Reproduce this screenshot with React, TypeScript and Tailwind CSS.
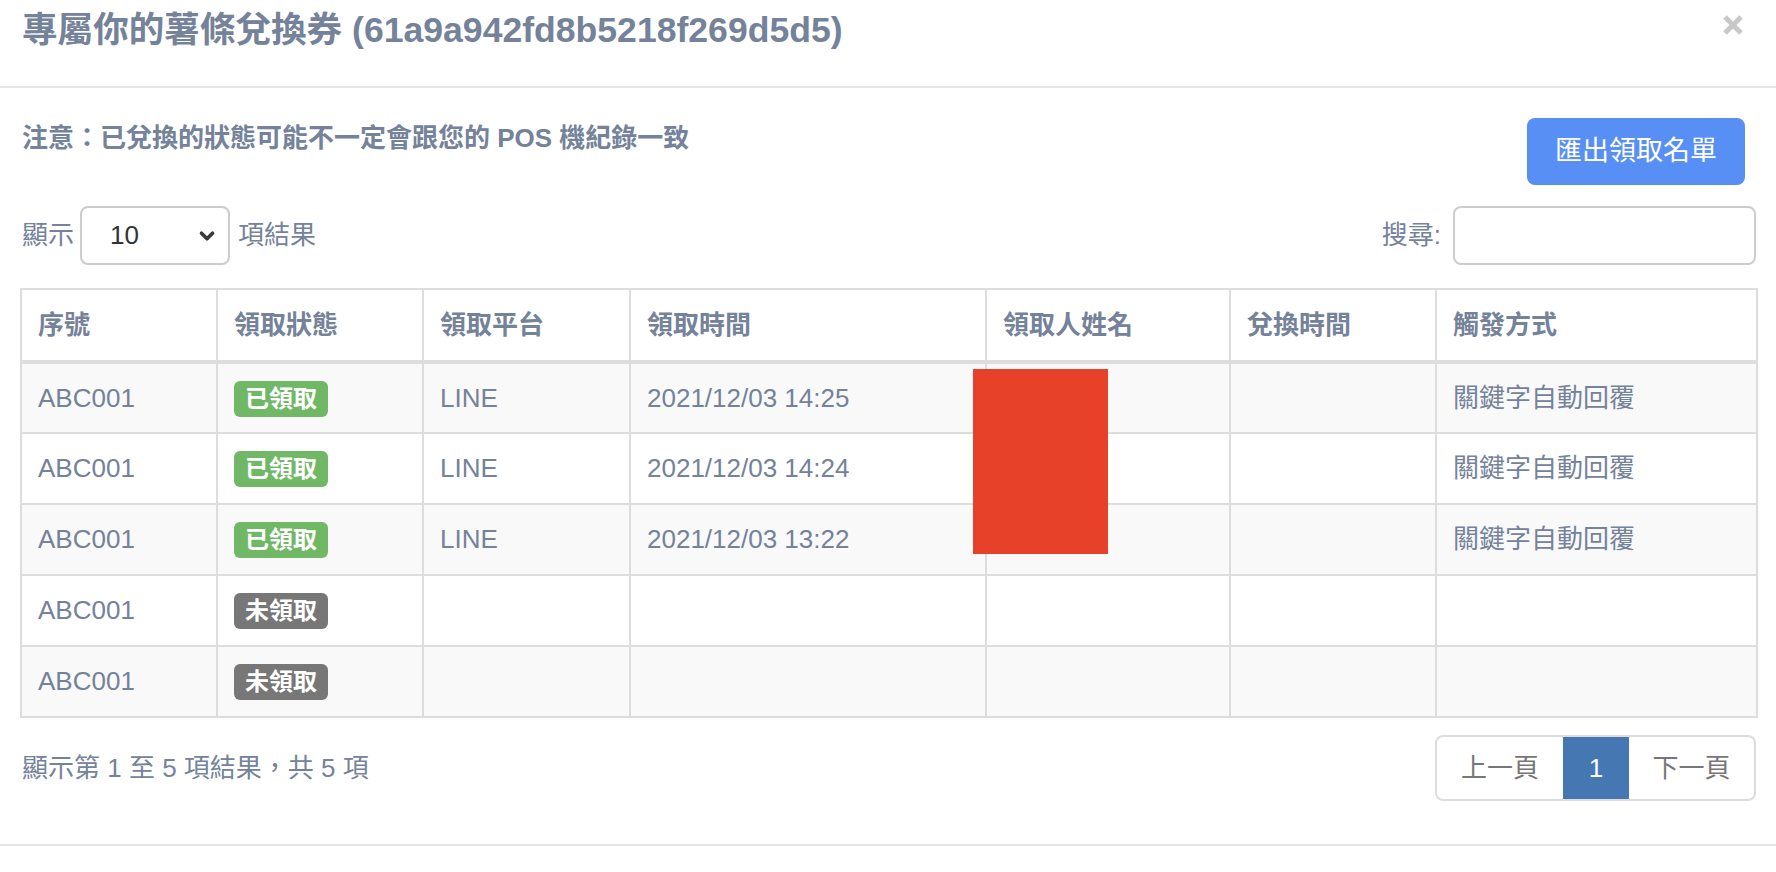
import { ChevronDown } from "lucide-react";

type Row = {
  id: string;
  claimed: boolean;
  platform: string;
  time: string;
  trigger: string;
};

const rows: Row[] = [
  { id: "ABC001", claimed: true, platform: "LINE", time: "2021/12/03 14:25", trigger: "關鍵字自動回覆" },
  { id: "ABC001", claimed: true, platform: "LINE", time: "2021/12/03 14:24", trigger: "關鍵字自動回覆" },
  { id: "ABC001", claimed: true, platform: "LINE", time: "2021/12/03 13:22", trigger: "關鍵字自動回覆" },
  { id: "ABC001", claimed: false, platform: "", time: "", trigger: "" },
  { id: "ABC001", claimed: false, platform: "", time: "", trigger: "" },
];

const headers = ["序號", "領取狀態", "領取平台", "領取時間", "領取人姓名", "兌換時間", "觸發方式"];
const widths = [196, 206, 207, 356, 244, 206, 321];

function Badge({ claimed }: { claimed: boolean }) {
  return (
    <span
      className={`inline-block h-[36px] px-[11px] rounded-[6px] text-white font-bold text-[24px] leading-[36px] ${
        claimed ? "bg-[#71b866]" : "bg-[#777777]"
      }`}
    >
      {claimed ? "已領取" : "未領取"}
    </span>
  );
}

export default function App() {
  return (
    <div className="w-[1776px] h-[872px] bg-white overflow-hidden text-[#74829a] font-['Liberation_Sans','Noto_Sans_CJK_TC',sans-serif]">
      {/* header */}
      <div className="h-[88px] border-b-2 border-[#e5e5e5] px-[22px] flex items-start justify-between">
        <h4 className="pt-[8px] text-[35.6px] leading-[44px] font-bold">專屬你的薯條兌換券 (61a9a942fd8b5218f269d5d5)</h4>
        <button className="mt-[14px] mr-[10px] w-[22px] h-[22px]">
          <svg viewBox="0 0 22 22" className="w-[22px] h-[22px]">
            <path d="M3 3 L19 19 M19 3 L3 19" stroke="#c8c8c8" strokeWidth="5" />
          </svg>
        </button>
      </div>

      {/* body */}
      <div className="px-[20px] pt-[30px]">
        <div className="flex items-start justify-between">
          <p className="ml-[2px] mt-[2px] text-[26px] leading-[36px] font-bold">注意：已兌換的狀態可能不一定會跟您的 POS 機紀錄一致</p>
          <button className="mr-[11px] w-[218px] h-[67px] rounded-[8px] bg-[#588ff5] text-white text-[27px]">匯出領取名單</button>
        </div>

        <div className="mt-[21px] flex items-center justify-between h-[59px]">
          <div className="flex items-center text-[26px] pl-[2px]">
            <span>顯示</span>
            <div className="ml-[6px] w-[150px] h-[59px] border-2 border-[#cccccc] rounded-[8px] flex items-center justify-between pl-[28px] pr-[10px] text-[#333333]">
              <span className="text-[26px]">10</span>
              <ChevronDown className="w-[22px] h-[22px] text-[#3a3a3a]" strokeWidth={4} />
            </div>
            <span className="ml-[8px]">項結果</span>
          </div>
          <div className="flex items-center text-[26px]">
            <span>搜尋:</span>
            <div className="ml-[12px] w-[303px] h-[59px] border-2 border-[#cccccc] rounded-[8px]" />
          </div>
        </div>

        <div className="relative mt-[23px]">
          <table className="w-[1736px] table-fixed border-collapse text-[26px]">
            <colgroup>
              {widths.map((w, i) => (
                <col key={i} style={{ width: w }} />
              ))}
            </colgroup>
            <thead>
              <tr>
                {headers.map((h) => (
                  <th key={h} className="h-[73px] border-2 border-b-4 border-[#dddddd] px-[16px] text-left font-bold">
                    {h}
                  </th>
                ))}
              </tr>
            </thead>
            <tbody>
              {rows.map((r, i) => (
                <tr key={i} className={i % 2 === 0 ? "bg-[#f9f9f9]" : "bg-white"}>
                  <td className="h-[71px] border-2 border-[#dddddd] px-[16px]">{r.id}</td>
                  <td className="h-[71px] border-2 border-[#dddddd] px-[16px]">
                    <Badge claimed={r.claimed} />
                  </td>
                  <td className="h-[71px] border-2 border-[#dddddd] px-[16px]">{r.platform}</td>
                  <td className="h-[71px] border-2 border-[#dddddd] px-[16px]">{r.time}</td>
                  <td className="h-[71px] border-2 border-[#dddddd] px-[16px]"></td>
                  <td className="h-[71px] border-2 border-[#dddddd] px-[16px]"></td>
                  <td className="h-[71px] border-2 border-[#dddddd] px-[16px]">{r.trigger}</td>
                </tr>
              ))}
            </tbody>
          </table>
          {/* redacted names */}
          <div className="absolute left-[953px] top-[81px] w-[135px] h-[185px] bg-[#e8412a]" />
        </div>

        <div className="mt-[17px] flex items-center justify-between">
          <span className="pl-[2px] text-[26px]">顯示第 1 至 5 項結果，共 5 項</span>
          <div className="flex h-[66px] border-2 border-[#dddddd] rounded-[8px] overflow-hidden text-[26px] text-[#777777]">
            <span className="w-[126px] flex items-center justify-center">上一頁</span>
            <span className="w-[66px] flex items-center justify-center bg-[#4577b3] text-white">1</span>
            <span className="w-[125px] flex items-center justify-center">下一頁</span>
          </div>
        </div>
      </div>

      <div className="mt-[43px] border-t-2 border-[#e5e5e5]" />
    </div>
  );
}
